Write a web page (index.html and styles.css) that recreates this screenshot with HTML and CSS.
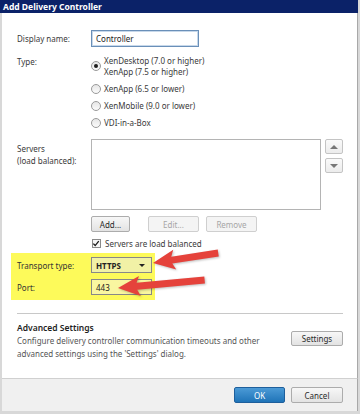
FILE: index.html
```html
<!DOCTYPE html>
<html lang="en">
<head>
    <meta charset="UTF-8">
    <meta name="viewport" content="width=device-width, initial-scale=1.0">
    <title>Add Delivery Controller</title>
    <link rel="stylesheet" href="styles.css">
</head>
<body>
    <div class="dialog">
        <div class="titlebar">Add Delivery Controller</div>

        <div class="content">
            <div class="row name-row">
                <div class="label">Display name:</div>
                <div class="field name-field">Controller</div>
            </div>

            <div class="row type-row">
                <div class="label">Type:</div>
                <div class="options">
                    <div class="option">
                        <span class="radio checked"></span>
                        <span>XenDesktop (7.0 or higher)<br>XenApp (7.5 or higher)</span>
                    </div>
                    <div class="option">
                        <span class="radio"></span>
                        <span>XenApp (6.5 or lower)</span>
                    </div>
                    <div class="option">
                        <span class="radio"></span>
                        <span>XenMobile (9.0 or lower)</span>
                    </div>
                    <div class="option">
                        <span class="radio"></span>
                        <span>VDI-in-a-Box</span>
                    </div>
                </div>
            </div>

            <div class="row servers-row">
                <div class="label servers-label">Servers<br>(load balanced):</div>
                <div class="listbox"></div>
                <div class="updown">
                    <button class="btn arrow-btn"><span class="tri up"></span></button>
                    <button class="btn arrow-btn"><span class="tri down"></span></button>
                </div>
            </div>

            <div class="row actions-row">
                <div class="label"></div>
                <button class="btn add-btn">Add...</button>
                <button class="btn edit-btn" disabled>Edit...</button>
                <button class="btn remove-btn" disabled>Remove</button>
            </div>

            <div class="row check-row">
                <div class="label"></div>
                <span class="checkbox">
                    <svg width="9" height="9" viewBox="0 0 9 9"><path d="M1.5 4.6 L3.6 6.8 L7.6 1.8" fill="none" stroke="#1a1a1a" stroke-width="1.5"/></svg>
                </span>
                <span>Servers are load balanced</span>
            </div>

            <div class="highlight">
                <div class="row transport-row">
                    <div class="label">Transport type:</div>
                    <div class="field select">HTTPS<span class="caret"></span></div>
                </div>
                <div class="row port-row">
                    <div class="label">Port:</div>
                    <div class="field port-field">443</div>
                </div>
            </div>

            <div class="separator"></div>

            <div class="advanced">
                <div class="advanced-text">
                    <div class="advanced-title">Advanced Settings</div>
                    <div class="advanced-desc">Configure delivery controller communication timeouts and other<br>advanced settings using the 'Settings' dialog.</div>
                </div>
                <button class="btn settings-btn">Settings</button>
            </div>
        </div>

        <div class="footer">
            <button class="btn ok-btn">OK</button>
            <button class="btn cancel-btn">Cancel</button>
        </div>

        <svg class="arrows" width="360" height="414" viewBox="0 0 360 414">
            <g fill="#e5423b">
                <polygon transform="translate(153 263) rotate(-8.7)" points="0,0 22,-10 19,-3.5 66,-3.5 66,3.5 19,3.5 22,10"/>
                <polygon transform="translate(118 288) rotate(-5.3)" points="0,0 22,-10 19,-3.5 87,-3.5 87,3.5 19,3.5 22,10"/>
            </g>
        </svg>
    </div>
</body>
</html>
```

FILE: styles.css
```css
* {
    box-sizing: border-box;
    margin: 0;
    padding: 0;
}

body {
    font-family: 'Noto Sans', 'Open Sans', sans-serif;
    font-size: 8px;
    color: #3a3a3a;
    background: #ffffff;
    width: 360px;
    height: 414px;
    overflow: hidden;
}

.dialog {
    position: relative;
    width: 360px;
    height: 414px;
    background: #d8d8d8;
    padding: 0 2px 3px 0;
}

.titlebar {
    height: 13px;
    background: #0b2268;
    color: #ffffff;
    font-weight: bold;
    font-size: 8.5px;
    line-height: 13px;
    padding-left: 3px;
}

.content {
    height: 365px;
    background: #ffffff;
    margin-left: 2px;
    padding: 17px 14px 0 15px;
    border-right: 1px solid #a8a8a8;
}

.row {
    display: flex;
    align-items: center;
}

.label {
    width: 74px;
    flex-shrink: 0;
}

.field {
    height: 17px;
    border: 1px solid #a9a9a9;
    background: #ffffff;
    line-height: 15px;
    padding-left: 4px;
    color: #222;
}

.name-field {
    width: 108px;
    border-color: #6a8fb8;
    box-shadow: inset 0 0 0 1px #c7d8ea;
}

.type-row {
    align-items: flex-start;
    margin-top: 8px;
}

.type-row .label {
    line-height: 11px;
    padding-top: 1px;
}

.options {
    display: flex;
    flex-direction: column;
    gap: 6px;
}

.option {
    display: flex;
    align-items: center;
    line-height: 11px;
    gap: 3px;
}

.radio {
    width: 10px;
    height: 10px;
    border-radius: 50%;
    border: 1px solid #9a9a9a;
    background: linear-gradient(#e6e6e6, #fbfbfb);
    display: flex;
    align-items: center;
    justify-content: center;
}

.radio.checked::after {
    content: "";
    width: 4px;
    height: 4px;
    border-radius: 50%;
    background: #1e1e1e;
}

.servers-row {
    align-items: flex-start;
    margin-top: 11px;
}

.servers-label {
    line-height: 12px;
    padding-top: 4px;
}

.listbox {
    width: 230px;
    height: 71px;
    border: 1px solid #b4b4b4;
    background: #ffffff;
}

.updown {
    display: flex;
    flex-direction: column;
    gap: 4px;
    margin-left: 4px;
}

.btn {
    font-family: inherit;
    font-size: 8px;
    color: #2a2a2a;
    height: 16px;
    border: 1px solid #acacac;
    border-radius: 2px;
    background: linear-gradient(#f7f7f7, #e3e3e3);
    display: flex;
    align-items: center;
    justify-content: center;
}

.btn:disabled {
    color: #a6a6a6;
    border-color: #cfcfcf;
    background: #f4f4f4;
}

.arrow-btn {
    width: 18px;
    height: 15px;
    border-color: #c4c4c4;
    background: linear-gradient(#fafafa, #ececec);
}

.tri {
    width: 0;
    height: 0;
    border-left: 4px solid transparent;
    border-right: 4px solid transparent;
}

.tri.up {
    border-bottom: 4px solid #777;
}

.tri.down {
    border-top: 4px solid #777;
}

.actions-row {
    margin-top: 6px;
    gap: 0;
}

.add-btn {
    width: 39px;
}

.edit-btn {
    width: 51px;
    margin-left: 18px;
}

.remove-btn {
    width: 51px;
    margin-left: 7px;
}

.check-row {
    margin-top: 6px;
    line-height: 11px;
}

.checkbox {
    width: 9px;
    height: 9px;
    border: 1px solid #8a8a8a;
    background: #f6f6f6;
    margin-left: 1px;
    margin-right: 4px;
    display: flex;
}

.checkbox svg {
    margin: -1px 0 0 -1px;
}

.highlight {
    width: 144px;
    margin-top: 4px;
    margin-left: -6px;
    padding: 4px 0 5px 6px;
    background: #fdfa5a;
    display: flex;
    flex-direction: column;
    gap: 6px;
    color: #333;
}

.select {
    width: 61px;
    height: 16px;
    font-weight: bold;
    border-color: #888;
    background: #f1f1a6;
    position: relative;
    display: flex;
    align-items: center;
    justify-content: space-between;
    padding-right: 6px;
    color: #222;
}

.caret {
    width: 0;
    height: 0;
    border-left: 3px solid transparent;
    border-right: 3px solid transparent;
    border-top: 3px solid #222;
}

.port-field {
    width: 61px;
    height: 16px;
    border-color: #888;
    background: #f9f6a0;
}

.separator {
    height: 1px;
    background: #c8c8c8;
    margin-top: 13px;
}

.advanced {
    display: flex;
    align-items: flex-start;
    justify-content: space-between;
    margin-top: 8px;
}

.advanced-title {
    font-size: 8.5px;
    font-weight: 600;
    color: #1e1e1e;
    line-height: 12px;
}

.advanced-desc {
    line-height: 13px;
    color: #555;
}

.settings-btn {
    width: 52px;
    height: 15px;
    margin-top: 9px;
}

.footer {
    height: 33px;
    margin-left: 2px;
    background: #f0f0f0;
    border-top: 1px solid #d0d0d0;
    border-right: 1px solid #a8a8a8;
    display: flex;
    justify-content: flex-end;
    align-items: center;
    gap: 6px;
    padding-right: 14px;
}

.ok-btn {
    width: 51px;
    color: #ffffff;
    border-color: #1e5f9c;
    background: linear-gradient(#4b9ad6, #1f74b8);
}

.cancel-btn {
    width: 52px;
}

.arrows {
    position: absolute;
    left: 0;
    top: 0;
    pointer-events: none;
    filter: drop-shadow(1px 1px 1px rgba(0, 0, 0, 0.25));
}
```
